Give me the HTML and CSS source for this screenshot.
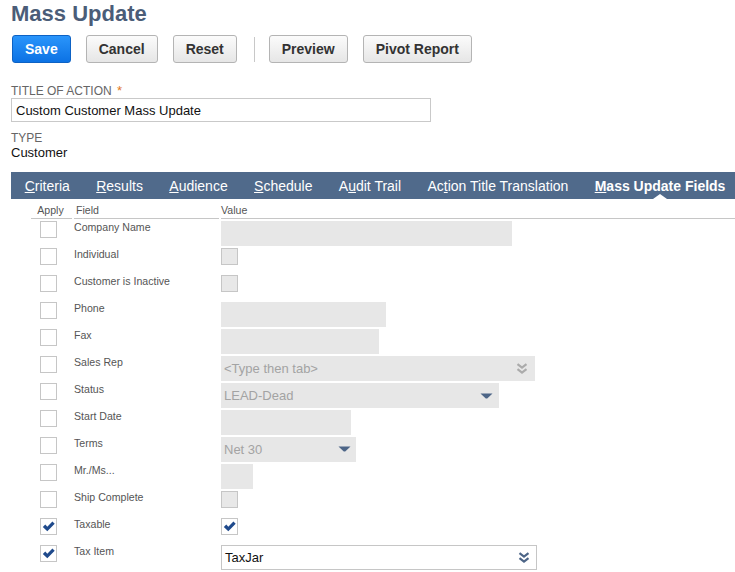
FILE: index.html
```html
<!DOCTYPE html>
<html lang="en">
<head>
<meta charset="utf-8">
<title>Mass Update</title>
<link rel="stylesheet" href="styles.css">
</head>
<body>
<div class="page">
  <h1 class="title">Mass Update</h1>

  <div class="toolbar">
    <button class="btn btn-primary">Save</button>
    <button class="btn">Cancel</button>
    <button class="btn">Reset</button>
    <span class="sep"></span>
    <button class="btn">Preview</button>
    <button class="btn">Pivot Report</button>
  </div>

  <div class="field field-title">
    <div class="lbl">TITLE OF ACTION <span class="req">*</span></div>
    <div class="textbox">Custom Customer Mass Update</div>
  </div>

  <div class="field field-type">
    <div class="lbl">TYPE</div>
    <div class="val">Customer</div>
  </div>

  <nav class="tabs">
    <span class="tab"><u>C</u>riteria</span>
    <span class="tab"><u>R</u>esults</span>
    <span class="tab"><u>A</u>udience</span>
    <span class="tab"><u>S</u>chedule</span>
    <span class="tab">A<u>u</u>dit Trail</span>
    <span class="tab">Ac<u>t</u>ion Title Translation</span>
    <span class="tab tab-active"><u>M</u>ass Update Fields</span>
  </nav>

  <div class="grid">
    <div class="hd hd-apply">Apply</div>
    <div class="hd hd-field">Field</div>
    <div class="hd hd-value">Value</div>

    <div class="c-apply"><span class="cb"></span></div>
    <div class="c-field">Company Name</div>
    <div class="c-value"><span class="inp w291"></span></div>

    <div class="c-apply"><span class="cb"></span></div>
    <div class="c-field">Individual</div>
    <div class="c-value"><span class="cb cb-dis"></span></div>

    <div class="c-apply"><span class="cb"></span></div>
    <div class="c-field">Customer is Inactive</div>
    <div class="c-value"><span class="cb cb-dis"></span></div>

    <div class="c-apply"><span class="cb"></span></div>
    <div class="c-field">Phone</div>
    <div class="c-value"><span class="inp w165"></span></div>

    <div class="c-apply"><span class="cb"></span></div>
    <div class="c-field">Fax</div>
    <div class="c-value"><span class="inp w158"></span></div>

    <div class="c-apply"><span class="cb"></span></div>
    <div class="c-field">Sales Rep</div>
    <div class="c-value">
      <span class="inp w314 sel"><span class="ph">&lt;Type then tab&gt;</span>
        <svg class="chev" width="12" height="11" viewBox="0 0 12 11"><path d="M1.5 1.2 L6 4.6 L10.5 1.2 M1.5 6.2 L6 9.6 L10.5 6.2" fill="none" stroke="#ababab" stroke-width="2.2"/></svg>
      </span>
    </div>

    <div class="c-apply"><span class="cb"></span></div>
    <div class="c-field">Status</div>
    <div class="c-value">
      <span class="inp w278 sel"><span class="ph">LEAD-Dead</span>
        <svg class="tri" width="13" height="6" viewBox="0 0 13 6"><path d="M0.5 0.5 H12.5 L7.2 5.5 H5.8 Z" fill="#4d6587"/></svg>
      </span>
    </div>

    <div class="c-apply"><span class="cb"></span></div>
    <div class="c-field">Start Date</div>
    <div class="c-value"><span class="inp w130"></span></div>

    <div class="c-apply"><span class="cb"></span></div>
    <div class="c-field">Terms</div>
    <div class="c-value">
      <span class="inp w135 sel"><span class="ph">Net 30</span>
        <svg class="tri tri-terms" width="13" height="6" viewBox="0 0 13 6"><path d="M0.5 0.5 H12.5 L7.2 5.5 H5.8 Z" fill="#4d6587"/></svg>
      </span>
    </div>

    <div class="c-apply"><span class="cb"></span></div>
    <div class="c-field">Mr./Ms...</div>
    <div class="c-value"><span class="inp w32"></span></div>

    <div class="c-apply"><span class="cb"></span></div>
    <div class="c-field">Ship Complete</div>
    <div class="c-value"><span class="cb cb-dis"></span></div>

    <div class="c-apply"><span class="cb"><svg width="15" height="15" viewBox="0 0 15 15"><path d="M1.8 7.9 L4.3 5.5 L6.3 7.7 L11.4 2.4 L13.7 4.7 L6.3 12.2 Z" fill="#1f4a8c"/></svg></span></div>
    <div class="c-field">Taxable</div>
    <div class="c-value"><span class="cb"><svg width="15" height="15" viewBox="0 0 15 15"><path d="M1.8 7.9 L4.3 5.5 L6.3 7.7 L11.4 2.4 L13.7 4.7 L6.3 12.2 Z" fill="#1f4a8c"/></svg></span></div>

    <div class="c-apply"><span class="cb"><svg width="15" height="15" viewBox="0 0 15 15"><path d="M1.8 7.9 L4.3 5.5 L6.3 7.7 L11.4 2.4 L13.7 4.7 L6.3 12.2 Z" fill="#1f4a8c"/></svg></span></div>
    <div class="c-field">Tax Item</div>
    <div class="c-value">
      <span class="inp inp-live w316 sel"><span class="txt">TaxJar</span>
        <svg class="chev" width="12" height="11" viewBox="0 0 12 11"><path d="M1.5 1.2 L6 4.6 L10.5 1.2 M1.5 6.2 L6 9.6 L10.5 6.2" fill="none" stroke="#4d6587" stroke-width="2.2"/></svg>
      </span>
    </div>
  </div>
</div>
</body>
</html>
```

FILE: styles.css
```css
* { box-sizing: border-box; }

html, body {
  margin: 0;
  padding: 0;
  background: #ffffff;
}

body {
  font-family: "Liberation Sans", Arial, Helvetica, sans-serif;
  color: #222;
}

.page {
  padding-left: 11px;
  width: 735px;
  overflow: hidden;
}

.title {
  margin: 0;
  padding-top: 1px;
  font-size: 22px;
  line-height: 26px;
  font-weight: bold;
  color: #4b5d78;
}

.toolbar {
  display: flex;
  align-items: center;
  gap: 15px;
  margin-top: 8px;
  margin-left: 1px;
  height: 28px;
}

.btn {
  height: 28px;
  padding: 0 12px;
  border: 1px solid #b4b4b4;
  border-radius: 3px;
  background: linear-gradient(#fbfbfb, #e6e6e6);
  font-family: inherit;
  font-size: 14px;
  font-weight: bold;
  color: #333;
  line-height: 26px;
  white-space: nowrap;
}

.btn-primary {
  background: linear-gradient(#2a95fb, #0c72e4);
  border-color: #0d62c4;
  color: #fff;
}

.sep {
  width: 1px;
  height: 25px;
  background: #c8c8c8;
  margin: 0 -1px 0 2px;
}

.field-title {
  margin-top: 21px;
}

.field-type {
  margin-top: 9px;
}

.lbl {
  font-size: 12px;
  line-height: 14px;
  color: #666;
}

.req {
  color: #e2781e;
  font-size: 13px;
  margin-left: 2px;
}

.textbox {
  width: 420px;
  height: 24px;
  border: 1px solid #c9c9c9;
  padding: 1px 4px 0;
  font-size: 13px;
  line-height: 21px;
  color: #111;
}

.val {
  font-size: 13px;
  line-height: 15px;
  color: #111;
}

.tabs {
  display: flex;
  margin-top: 12px;
  height: 27px;
  padding-top: 2px;
  background: #506a8b;
  white-space: nowrap;
}

.tab {
  position: relative;
  padding: 0 13.2px;
  font-size: 14px;
  line-height: 25px;
  color: #fff;
}

.tab:first-child {
  padding-left: 13.7px;
}

.tab u {
  text-decoration-thickness: 1px;
  text-underline-offset: 1px;
}

.tab-active {
  font-weight: bold;
}

.tab-active::after {
  content: "";
  position: absolute;
  left: 50%;
  bottom: 0;
  margin-left: -7px;
  border-left: 7px solid transparent;
  border-right: 7px solid transparent;
  border-bottom: 5px solid #fff;
}

.grid {
  display: grid;
  grid-template-columns: 41px 145px 1fr;
  grid-template-rows: 20px;
  grid-auto-rows: 25px;
  column-gap: 2px;
  row-gap: 2px;
  margin-left: 20px;
}

.hd {
  height: 20px;
  padding-top: 5px;
  border-bottom: 1px solid #c6c6c6;
  font-size: 10.6px;
  line-height: 13px;
  color: #555;
}

.hd-apply {
  text-align: center;
  padding-right: 2px;
}

.hd-field {
  padding-left: 2px;
}

.c-apply {
  padding-left: 9px;
}

.c-field {
  font-size: 10.6px;
  line-height: 13px;
  color: #555;
}

.cb {
  display: flex;
  align-items: center;
  justify-content: center;
  width: 17px;
  height: 17px;
  border: 1px solid #c6c6c6;
  background: #fff;
}

.cb-dis {
  background: #e8e8e8;
}

.inp {
  position: relative;
  display: flex;
  align-items: center;
  height: 25px;
  background: #e7e7e7;
  font-size: 13px;
  line-height: 25px;
}

.ph {
  padding-left: 3px;
  color: #a3a3a3;
}

.inp-live {
  background: #fff;
  border: 1px solid #c6c6c6;
}

.txt {
  padding-left: 3px;
  color: #111;
  line-height: 23px;
}

.sel {
  justify-content: space-between;
}

.chev {
  margin-right: 7px;
  margin-top: -1px;
}

.inp-live .chev {
  margin-right: 6px;
}

.tri {
  margin-right: 6px;
  margin-top: 0;
}

.tri-terms {
  margin-right: 5px;
  margin-top: -2px;
}

.w291 { width: 291px; }
.w165 { width: 165px; }
.w158 { width: 158px; }
.w314 { width: 314px; }
.w278 { width: 278px; }
.w130 { width: 130px; }
.w135 { width: 135px; }
.w32  { width: 32px; }
.w316 { width: 316px; }
```
